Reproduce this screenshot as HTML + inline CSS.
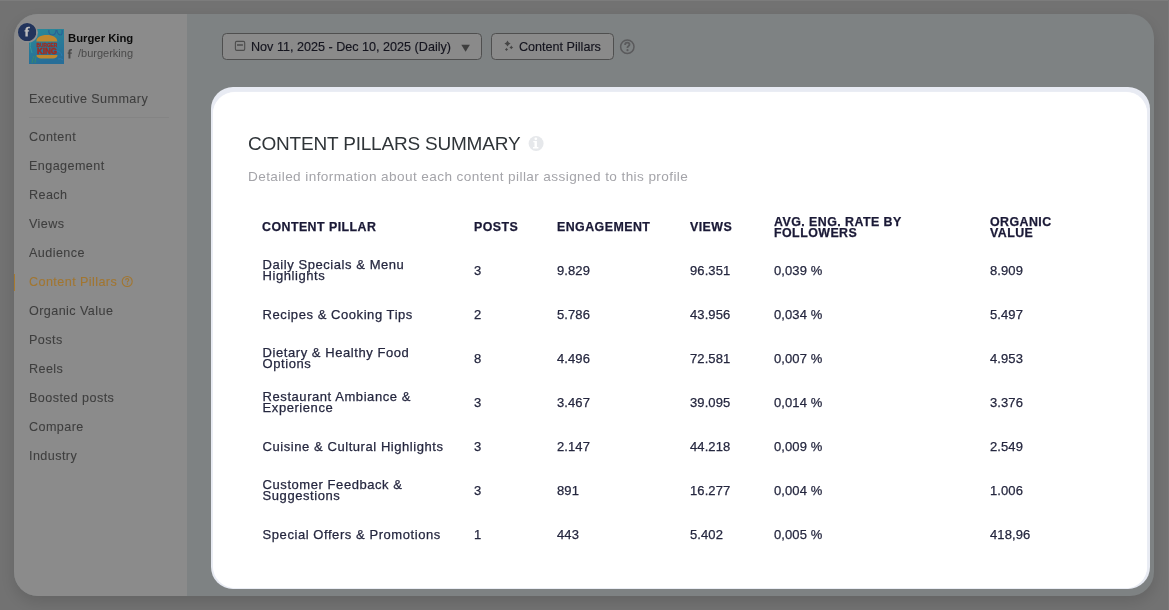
<!DOCTYPE html>
<html><head><meta charset="utf-8">
<style>
*{box-sizing:border-box;margin:0;padding:0}
html,body{width:1169px;height:610px;overflow:hidden}
body{background:#727272;font-family:"Liberation Sans",sans-serif;position:relative}
.topline{position:absolute;left:0;top:0;width:1169px;height:1px;background:#7c7c7c}
.rightline{position:absolute;right:0;top:0;width:1px;height:610px;background:#787878}
.card{will-change:transform;position:absolute;left:14px;top:14px;width:1140px;height:582px;border-radius:24px;background:#7e8283;overflow:hidden;box-shadow:0 6px 14px rgba(0,0,0,0.12)}
.side{position:absolute;left:0;top:0;width:173px;height:582px;background:#8b8b8b}
.abs{position:absolute;white-space:nowrap}
.nav{position:absolute;left:15px;font-size:12.6px;color:#3e3e3e;letter-spacing:0.42px;-webkit-text-stroke:0.08px currentColor}
.modal{will-change:transform;position:absolute;left:211px;top:87px;width:939px;height:502px;border-radius:22px;background:#e8ebf3}
.mi{position:absolute;left:1.5px;top:4.5px;right:3px;bottom:1px;border-radius:22px 21px 21px 22px;background:#fff;box-shadow:0 0 1px 0 #fff}
.th{position:absolute;font-weight:bold;font-size:12.4px;color:#1a1936;letter-spacing:0.45px;line-height:10.5px;white-space:nowrap;-webkit-text-stroke:0.25px #1a1936}
.td{position:absolute;font-size:13px;color:#25273f;letter-spacing:0.1px;line-height:10.7px;white-space:nowrap;-webkit-text-stroke:0.25px #25273f}
.tn{letter-spacing:0.56px}
</style></head><body>
<div class="topline"></div><div class="rightline"></div>
<div class="card">
  <div class="side">
    <!-- logo -->
    <svg class="abs" style="left:15px;top:15px" width="35" height="35" viewBox="0 0 35 35">
      <defs><linearGradient id="lg" x1="0" y1="0" x2="0.3" y2="1"><stop offset="0" stop-color="#2a8a98"/><stop offset="1" stop-color="#276e98"/></linearGradient></defs>
      <rect width="35" height="35" fill="url(#lg)"/>
      <path d="M20 1 q-1 4 3 5 q4 0 4 -5 M28 1 q0 4 3 5 q3 0 2 -5" stroke="#2a5f96" stroke-width="1.1" fill="none"/>
      <path d="M3 34 q1 -5 2 -7 M6 34 q0 -5 2 -8" stroke="#3a8a6a" stroke-width="1" fill="none"/>
      <path d="M2 10 q-2 8 1 14" stroke="#3a9a9a" stroke-width="0.8" fill="none"/>
      <path d="M27 22 q5 0 6 5 M29 30 q3 -1 5 1" stroke="#2f7ab0" stroke-width="0.9" fill="none"/>
      <path d="M7.3 12.6 C7.3 8.5 11.5 6 17.8 6 C24.1 6 28.3 8.5 28.3 12.6 Z" fill="#bf872e"/>
      <text x="7.6" y="18.2" font-family="Liberation Sans" font-weight="bold" font-size="6.2" fill="#a52a1e" stroke="#a52a1e" stroke-width="0.35" textLength="20.6" lengthAdjust="spacingAndGlyphs">BURGER</text>
      <text x="8" y="25.2" font-family="Liberation Sans" font-weight="bold" font-size="8.3" fill="#a52a1e" stroke="#a52a1e" stroke-width="0.45" textLength="20" lengthAdjust="spacingAndGlyphs">KING</text>
      <path d="M7.5 26 H28.5 C28.5 28.2 26.5 29.5 24 29.5 H12 C9.5 29.5 7.5 28.2 7.5 26 Z" fill="#bf872e"/>
    </svg>
    <div class="abs" style="left:2.7px;top:7.7px;width:21.3px;height:21.3px;border-radius:50%;background:#8e8e8e"></div>
    <svg class="abs" style="left:4.2px;top:9.2px" width="18.3" height="18.3" viewBox="0 0 18.3 18.3">
      <circle cx="9.15" cy="9.15" r="9.15" fill="#22345c"/>
      <path d="M9.8 13.4 V8.6 H11.1 V7.2 H9.8 V6.3 C9.8 5.6 10.2 5.2 11 5.2 H11.9 V3.8 H10.7 C8.6 3.8 7.4 4.9 7.4 6.6 V7.2 H6.5 V8.6 H7.4 V13.4 Z" fill="#bdbdbd"/>
    </svg>
    <div class="abs" style="left:54px;top:18px;font-weight:bold;font-size:11.3px;color:#0c0c0c">Burger King</div>
    <svg class="abs" style="left:53px;top:34px" width="7" height="11" viewBox="0 0 7 11"><path d="M3.4 10.5 V5.8 H4.8 V4.4 H3.4 V3.5 C3.4 2.9 3.7 2.6 4.4 2.6 H5 V1.1 H3.9 C2.2 1.1 1.5 2.1 1.5 3.4 V4.4 H0.7 V5.8 H1.5 V10.5 Z" fill="#4a4a4a"/></svg>
    <div class="abs" style="left:64px;top:33px;font-size:11px;color:#4a4a4a">/burgerking</div>

    <div class="nav" style="top:78px">Executive Summary</div>
    <div class="abs" style="left:15px;top:103px;width:140px;height:1px;background:#848484"></div>
    <div class="nav" style="top:116px">Content</div>
    <div class="nav" style="top:145px">Engagement</div>
    <div class="nav" style="top:174px">Reach</div>
    <div class="nav" style="top:203px">Views</div>
    <div class="nav" style="top:232px">Audience</div>
    <div class="abs" style="left:0;top:260px;width:1px;height:17px;background:#a87a2e"></div>
    <div class="nav" style="top:261px;color:#a27630">Content Pillars</div>
    <svg class="abs" style="left:106px;top:260px" width="14" height="14" viewBox="0 0 14 14">
      <circle cx="7.2" cy="7.5" r="5" fill="none" stroke="#a27630" stroke-width="1.1"/>
      <path d="M5.6 6.3 C5.6 5.2 6.3 4.6 7.2 4.6 C8.2 4.6 8.8 5.2 8.8 6 C8.8 7 7.6 7.2 7.4 8 V8.5" fill="none" stroke="#a27630" stroke-width="1.1"/>
      <circle cx="7.4" cy="10" r="0.7" fill="#a27630"/>
    </svg>
    <div class="nav" style="top:290px">Organic Value</div>
    <div class="nav" style="top:319px">Posts</div>
    <div class="nav" style="top:348px">Reels</div>
    <div class="nav" style="top:377px">Boosted posts</div>
    <div class="nav" style="top:406px">Compare</div>
    <div class="nav" style="top:435px">Industry</div>
  </div>

  <!-- top controls -->
  <div class="abs" style="left:208px;top:19px;width:260px;height:27px;border:1px solid #4f4f4f;border-radius:4.5px;background:#8a8a8a"></div>
  <div class="abs" style="left:237px;top:26.3px;font-size:12.6px;color:#14141e;-webkit-text-stroke:0.15px #14141e">Nov 11, 2025 - Dec 10, 2025 (Daily)</div>
  <div class="abs" style="left:477px;top:19px;width:123px;height:27px;border:1px solid #4f4f4f;border-radius:4.5px;background:#8a8a8a"></div>
  <div class="abs" style="left:505px;top:26.3px;font-size:12.6px;color:#14141e;-webkit-text-stroke:0.15px #14141e">Content Pillars</div>
  <svg class="abs" style="left:220px;top:26px" width="12" height="12" viewBox="0 0 12 12">
    <rect x="1.4" y="1.4" width="9.3" height="9" rx="1.3" fill="none" stroke="#4d4d4d" stroke-width="1.1"/>
    <rect x="3" y="4.2" width="5.9" height="1.6" fill="#505050"/>
  </svg>
  <svg class="abs" style="left:446px;top:30px" width="11" height="9" viewBox="0 0 11 9">
    <path d="M1.3 0.8 H9.9 L5.6 7.7 Z" fill="#3f3f3f"/>
  </svg>
  <svg class="abs" style="left:490px;top:26px" width="12" height="12" viewBox="0 0 12 12">
    <path d="M3.5 0.3999999999999999 Q4.368 2.6319999999999997 6.6 3.5 Q4.368 4.368 3.5 6.6 Q2.6319999999999997 4.368 0.3999999999999999 3.5 Q2.6319999999999997 2.6319999999999997 3.5 0.3999999999999999 Z M7.3 5.5 Q7.87 6.83 9.2 7.4 Q7.87 7.970000000000001 7.3 9.3 Q6.7299999999999995 7.970000000000001 5.4 7.4 Q6.7299999999999995 6.83 7.3 5.5 Z M2.5 7.800000000000001 Q2.98 8.92 4.1 9.4 Q2.98 9.88 2.5 11.0 Q2.02 9.88 0.8999999999999999 9.4 Q2.02 8.92 2.5 7.800000000000001 Z" fill="#454545"/>
  </svg>
  <svg class="abs" style="left:604px;top:24px" width="18" height="18" viewBox="0 0 18 18">
    <circle cx="9.3" cy="8.7" r="6.7" fill="none" stroke="#5a5a5c" stroke-width="1.5"/>
    <path d="M7.1 6.9 C7.1 5.5 8 4.7 9.3 4.7 C10.6 4.7 11.5 5.5 11.5 6.6 C11.5 7.9 9.9 8.2 9.5 9.3 V10.1" fill="none" stroke="#5a5a5c" stroke-width="1.8"/>
    <circle cx="9.5" cy="12.2" r="1.1" fill="#5a5a5c"/>
  </svg>
</div>

<div class="modal"><div class="mi"></div>
  <div class="abs" style="left:37px;top:46px;font-size:19px;color:#2f3438;letter-spacing:-0.2px">CONTENT PILLARS SUMMARY</div>
  <svg class="abs" style="left:317px;top:48px" width="17" height="17" viewBox="0 0 17 17">
    <circle cx="8.1" cy="8.5" r="7.5" fill="#e6e8eb"/>
    <circle cx="7.8" cy="3.8" r="1.35" fill="#fff"/>
    <path d="M5.3 6 H8.9 V12 H10.4 V13.4 H5 V12 H6.5 V7.2 H5.3 Z" fill="#fff"/>
  </svg>
  <div class="abs" style="left:37px;top:82px;font-size:13.6px;color:#a4a4a9;letter-spacing:0.4px">Detailed information about each content pillar assigned to this profile</div>

  <div class="th" style="left:51px;top:135px">CONTENT PILLAR</div>
  <div class="th" style="left:263px;top:135px">POSTS</div>
  <div class="th" style="left:346px;top:135px">ENGAGEMENT</div>
  <div class="th" style="left:479px;top:135px">VIEWS</div>
  <div class="th" style="left:563px;top:130px">AVG. ENG. RATE BY<br>FOLLOWERS</div>
  <div class="th" style="left:779px;top:130px">ORGANIC<br>VALUE</div>
  <div class="td tn" style="left:51.6px;top:173.3px">Daily Specials &amp; Menu<br>Highlights</div>
  <div class="td" style="left:263px;top:178.7px">3</div>
  <div class="td" style="left:346px;top:178.7px">9.829</div>
  <div class="td" style="left:479px;top:178.7px">96.351</div>
  <div class="td" style="left:563px;top:178.7px">0,039 %</div>
  <div class="td" style="left:779px;top:178.7px">8.909</div>
  <div class="td tn" style="left:51.6px;top:222.7px">Recipes &amp; Cooking Tips</div>
  <div class="td" style="left:263px;top:222.7px">2</div>
  <div class="td" style="left:346px;top:222.7px">5.786</div>
  <div class="td" style="left:479px;top:222.7px">43.956</div>
  <div class="td" style="left:563px;top:222.7px">0,034 %</div>
  <div class="td" style="left:779px;top:222.7px">5.497</div>
  <div class="td tn" style="left:51.6px;top:261.3px">Dietary &amp; Healthy Food<br>Options</div>
  <div class="td" style="left:263px;top:266.6px">8</div>
  <div class="td" style="left:346px;top:266.6px">4.496</div>
  <div class="td" style="left:479px;top:266.6px">72.581</div>
  <div class="td" style="left:563px;top:266.6px">0,007 %</div>
  <div class="td" style="left:779px;top:266.6px">4.953</div>
  <div class="td tn" style="left:51.6px;top:305.3px">Restaurant Ambiance &amp;<br>Experience</div>
  <div class="td" style="left:263px;top:310.6px">3</div>
  <div class="td" style="left:346px;top:310.6px">3.467</div>
  <div class="td" style="left:479px;top:310.6px">39.095</div>
  <div class="td" style="left:563px;top:310.6px">0,014 %</div>
  <div class="td" style="left:779px;top:310.6px">3.376</div>
  <div class="td tn" style="left:51.6px;top:354.6px">Cuisine &amp; Cultural Highlights</div>
  <div class="td" style="left:263px;top:354.6px">3</div>
  <div class="td" style="left:346px;top:354.6px">2.147</div>
  <div class="td" style="left:479px;top:354.6px">44.218</div>
  <div class="td" style="left:563px;top:354.6px">0,009 %</div>
  <div class="td" style="left:779px;top:354.6px">2.549</div>
  <div class="td tn" style="left:51.6px;top:393.3px">Customer Feedback &amp;<br>Suggestions</div>
  <div class="td" style="left:263px;top:398.6px">3</div>
  <div class="td" style="left:346px;top:398.6px">891</div>
  <div class="td" style="left:479px;top:398.6px">16.277</div>
  <div class="td" style="left:563px;top:398.6px">0,004 %</div>
  <div class="td" style="left:779px;top:398.6px">1.006</div>
  <div class="td tn" style="left:51.6px;top:442.6px">Special Offers &amp; Promotions</div>
  <div class="td" style="left:263px;top:442.6px">1</div>
  <div class="td" style="left:346px;top:442.6px">443</div>
  <div class="td" style="left:479px;top:442.6px">5.402</div>
  <div class="td" style="left:563px;top:442.6px">0,005 %</div>
  <div class="td" style="left:779px;top:442.6px">418,96</div>
</div>
</body></html>
